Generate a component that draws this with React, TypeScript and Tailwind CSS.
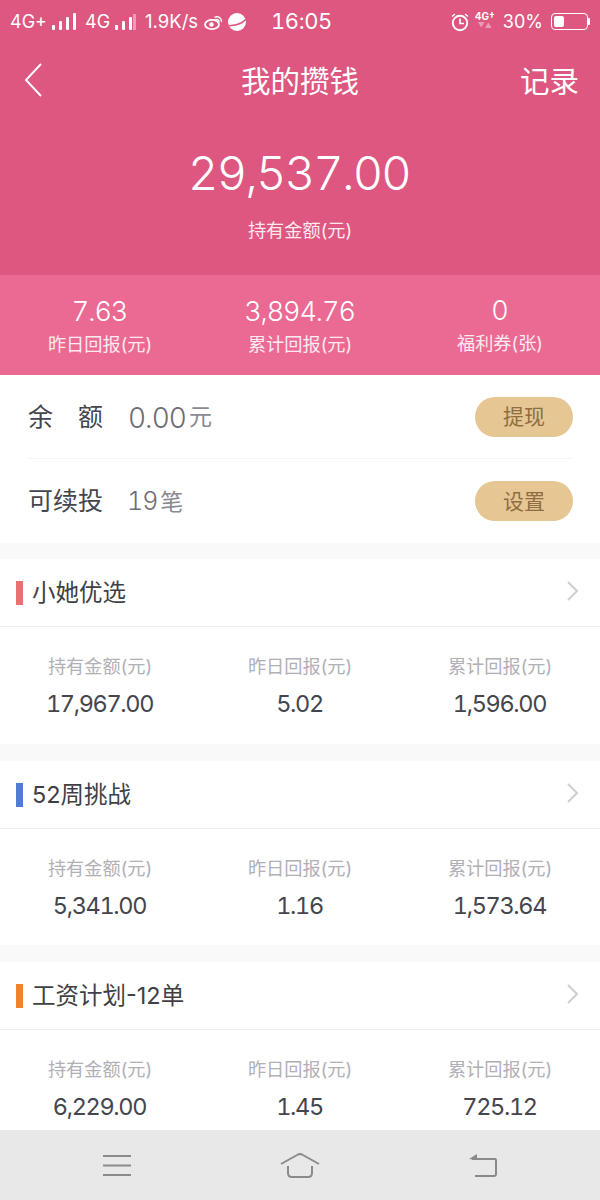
function Signal({ bars }: { bars: number[] }) {
  return (
    <div className="flex items-end gap-[4px] h-[17px]">
      {bars.map((h, i) => (
        <div key={i} className="w-[3px] bg-white rounded-[1px]" style={{ height: h }} />
      ))}
    </div>
  );
}

function StatusBar() {
  return (
    <div className="h-[42px] flex items-center text-white text-[18px] pl-[10px] pr-[10px] pt-[1px]">
      <span className="w-[42px] text-[18px] whitespace-nowrap">4G+</span>
      <Signal bars={[5, 9, 13, 17]} />
      <span className="ml-[9px] w-[30px] text-[18px]">4G</span>
      <Signal bars={[5, 9, 13]} />
      <div className="ml-[1px] w-[3px] h-[16px] bg-[#ec9db5]" />
      <span className="ml-[9px] w-[59px] text-[18.5px] whitespace-nowrap">1.9K/s</span>
      <svg className="flex-none" width="19" height="16" viewBox="0 0 19 16" fill="none">
        <ellipse cx="8" cy="10.5" rx="7" ry="4.6" stroke="#fff" strokeWidth="1.8" />
        <circle cx="7.5" cy="10.5" r="2.2" fill="#fff" />
        <path d="M11 3.2C14 1.8 17.5 3.5 17.5 7.5M11.5 5.8C13.5 5 15 6 15 7.8" stroke="#fff" strokeWidth="1.4" strokeLinecap="round" />
      </svg>
      <svg className="ml-[4px] flex-none" width="20" height="20" viewBox="0 0 20 20">
        <circle cx="10" cy="10" r="9" fill="#fff" />
        <path d="M1 12.5C7 13.5 14 11 19 6.5L19.5 8C15 12.5 8 15 2 14Z" fill="#dd5a82" />
      </svg>
      <span className="ml-[24px] text-[22px] tabular-nums tracking-[-0.4px] whitespace-nowrap">16:05</span>
      <div className="flex-1" />
      <svg width="20" height="20" viewBox="0 0 20 20" fill="none" stroke="#fff">
        <circle cx="10" cy="11" r="7.2" strokeWidth="1.9" />
        <path d="M10 6.5V11.5H14" strokeWidth="1.7" />
        <path d="M2 4.5L5 2M18 4.5L15 2" strokeWidth="1.5" />
      </svg>
      <div className="ml-[5px] flex flex-col items-center w-[20px] -mt-[4px]">
        <span className="text-[10px] leading-[12px] font-bold whitespace-nowrap">4G†</span>
        <span className="text-[7px] leading-[7px] text-[#ec9db5]">▼▲</span>
      </div>
      <span className="ml-[8px] text-[18px] whitespace-nowrap">30%</span>
      <div className="ml-[8px] w-[37px] h-[17px] border border-white rounded-[4px] p-[2px] flex">
        <div className="w-[10px] bg-white rounded-[2px]" />
      </div>
      <div className="w-[2px] h-[7px] bg-white rounded-r-[1px]" />
    </div>
  );
}

function HeaderStat({ value, label, shift }: { value: string; label: string; shift?: boolean }) {
  return (
    <div className={"flex-1 flex flex-col items-center " + (shift ? "-mt-[3px]" : "")}>
      <span className="text-[27px] leading-[32px] font-light tabular-nums tracking-[-1.1px] mt-[1px] -ml-[1px]">{value}</span>
      <span className="text-[18.2px] leading-[26px] text-[#fde9ef] mt-[3px] whitespace-nowrap">{label}</span>
    </div>
  );
}

function Button({ label }: { label: string }) {
  return (
    <div className="w-[98px] h-[40px] rounded-full bg-[#e6c794] text-[#8f6d42] text-[21px] flex items-center justify-center pt-[1px]">
      {label}
    </div>
  );
}

function Cell({ label, value }: { label: string; value: string }) {
  return (
    <div className="flex-1 flex flex-col items-center">
      <span className="text-[18.2px] leading-[24px] text-[#b0b0b6] whitespace-nowrap mt-[1px]">{label}</span>
      <span className="mt-[12px] -ml-[1px] text-[23.5px] leading-[28px] text-[#45454d] tabular-nums tracking-[-1.35px]">{value}</span>
    </div>
  );
}

function Card({ color, title, cells, className }: { color: string; title: string; cells: [string, string, string]; className: string }) {
  return (
    <div className={"bg-white " + className}>
      <div className="h-[68px] flex items-center border-b border-[#efeff1]">
        <div className={"ml-[16px] w-[7px] h-[24px] " + color} />
        <span className="ml-[9px] text-[23.5px] text-[#3f3f46] mt-[1px]">{title}</span>
        <div className="flex-1" />
        <svg className="mr-[20px] -mt-[3px]" width="14" height="22" viewBox="0 0 14 22" fill="none" stroke="#cfcfd3" strokeWidth="2">
          <path d="M2 2L11 11L2 20" />
        </svg>
      </div>
      <div className="flex pt-[26px]">
        <Cell label="持有金额(元)" value={cells[0]} />
        <Cell label="昨日回报(元)" value={cells[1]} />
        <Cell label="累计回报(元)" value={cells[2]} />
      </div>
    </div>
  );
}

export default function App() {
  return (
    <div className="w-[600px] h-[1200px] overflow-hidden flex flex-col bg-[#f9f9f9] font-['Inter','Noto_Sans_CJK_SC',sans-serif]">
      <div className="h-[275px] bg-[#dd5780] text-white flex flex-col">
        <StatusBar />
        <div className="h-[76px] flex items-center justify-between pl-[24px] pr-[21px] relative">
          <svg width="20" height="34" viewBox="0 0 20 34" fill="none" stroke="#fff" strokeWidth="2">
            <path d="M17 1L2 17L17 33" />
          </svg>
          <span className="absolute left-0 right-0 text-center text-[29.5px] mt-[2px]">我的攒钱</span>
          <span className="text-[29.5px] mt-[2px]">记录</span>
        </div>
        <div className="flex flex-col items-center">
          <span className="mt-[26px] -ml-[2px] text-[47px] leading-[58px] font-light tabular-nums tracking-[-1.8px]">29,537.00</span>
          <span className="mt-[15px] text-[18.2px] leading-[26px] text-[#fde9ef]">持有金额(元)</span>
        </div>
      </div>
      <div className="h-[100px] bg-[#eb6a93] text-white flex items-center pt-[2px]">
        <HeaderStat value="7.63" label="昨日回报(元)" />
        <HeaderStat value="3,894.76" label="累计回报(元)" />
        <HeaderStat value="0" label="福利券(张)" shift />
      </div>

      <div className="h-[168px] bg-white px-[28px] flex flex-col">
        <div className="h-[84px] flex items-center border-b border-[#f5f5f5]">
          <span className="w-[100px] text-[25px] text-[#45454d] whitespace-pre mt-[2px]">余　额</span>
          <span className="text-[28px] font-light text-[#6d6d75] mt-[2px] tabular-nums tracking-[-1px]">0.00</span>
          <span className="ml-[3px] text-[23px] text-[#8a8a90] mt-[2px]">元</span>
          <div className="flex-1" />
          <div className="-mr-[1px]"><Button label="提现" /></div>
        </div>
        <div className="h-[84px] flex items-center">
          <span className="w-[99px] text-[25px] text-[#45454d] mt-[2px] whitespace-nowrap">可续投</span>
          <span className="text-[25px] font-light text-[#6d6d75] mt-[2px] tabular-nums tracking-[-1px]">19</span>
          <span className="ml-[3px] text-[23px] text-[#8a8a90] mt-[2px]">笔</span>
          <div className="flex-1" />
          <div className="-mr-[1px]"><Button label="设置" /></div>
        </div>
      </div>

      <Card className="mt-[16px] h-[185px] shrink-0" color="bg-[#ec6f72]" title="小她优选" cells={["17,967.00", "5.02", "1,596.00"]} />
      <Card className="mt-[17px] h-[184px] shrink-0" color="bg-[#4f7bd9]" title="52周挑战" cells={["5,341.00", "1.16", "1,573.64"]} />
      <Card className="mt-[17px] h-[168px] shrink-0 overflow-hidden" color="bg-[#f58025]" title="工资计划-12单" cells={["6,229.00", "1.45", "725.12"]} />

      <div className="h-[70px] shrink-0 bg-[#e8e8e8] flex items-center justify-between px-[103px]">
        <svg width="28" height="21" viewBox="0 0 28 21" fill="none" stroke="#8a8a8a" strokeWidth="2">
          <path d="M0 1H28M0 10.5H28M0 20H28" />
        </svg>
        <svg width="40" height="25" viewBox="0 0 40 25" fill="none" stroke="#8a8a8a" strokeWidth="2" strokeLinejoin="round">
          <path d="M1 11L18 1.5Q20 .5 22 1.5L39 11" />
          <path d="M8 13V20Q8 24 12 24H28Q32 24 32 20V13" />
        </svg>
        <svg width="28" height="23" viewBox="0 0 28 23" fill="none" stroke="#8a8a8a" strokeWidth="2">
          <path d="M3 5H26Q27 5 27 6V20Q27 22 25 22H6" />
          <path d="M0 5L8 0V6Z" fill="#8a8a8a" stroke="none" />
        </svg>
      </div>
    </div>
  );
}
